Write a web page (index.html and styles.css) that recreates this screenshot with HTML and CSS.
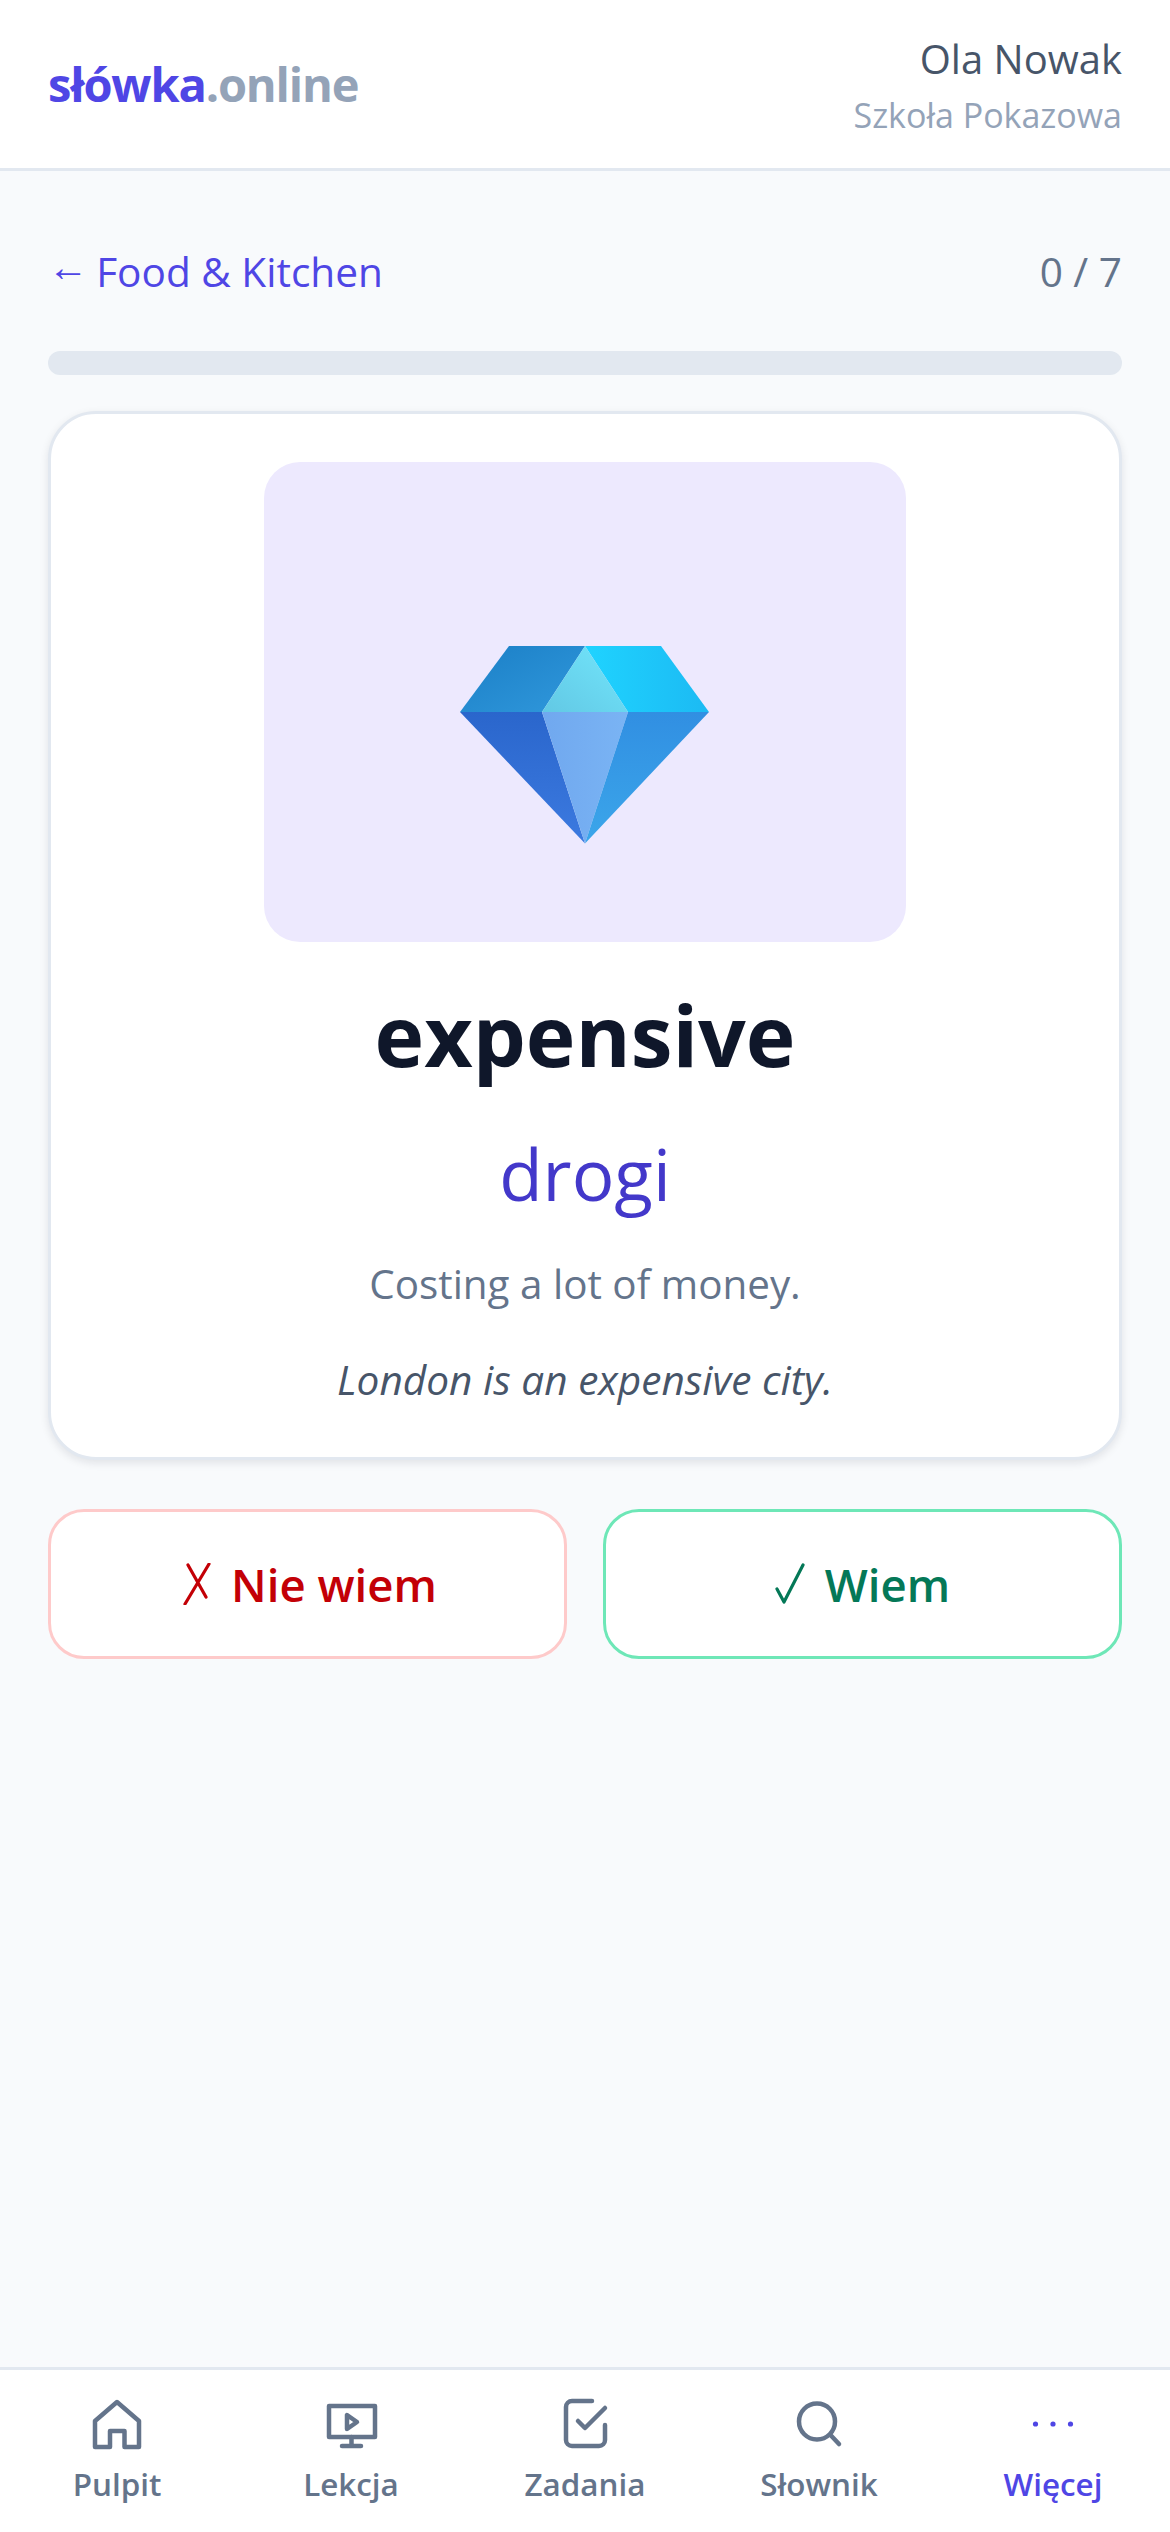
FILE: index.html
```html
<!DOCTYPE html>
<html lang="pl">
<head>
<meta charset="utf-8">
<title>słówka.online</title>
<link rel="stylesheet" href="styles.css">
</head>
<body>
<div class="app">
  <header class="topbar">
    <div class="logo"><span class="logo-main">słówka</span><span class="logo-dot">.online</span></div>
    <div class="user">
      <div class="user-name">Ola Nowak</div>
      <div class="user-school">Szkoła Pokazowa</div>
    </div>
  </header>
  <main class="content">
    <div class="crumbs">
      <a class="back"><span class="arrow">← </span>Food &amp; Kitchen</a>
      <span class="count">0 / 7</span>
    </div>
    <div class="progress"></div>
    <section class="card">
      <div class="picture">
        <svg class="gem" viewBox="30 -60 250 284" width="250" height="284" aria-label="💎">
          <defs>
            <linearGradient id="g1" x1="0" y1="0" x2="1" y2="1"><stop offset="0" stop-color="#1b7fc6"/><stop offset="1" stop-color="#3098dc"/></linearGradient>
            <linearGradient id="g2" x1="0" y1="0" x2="1" y2="0"><stop offset="0" stop-color="#1fd3ff"/><stop offset="1" stop-color="#1cbaf3"/></linearGradient>
            <linearGradient id="g3" x1="0" y1="1" x2="1" y2="0"><stop offset="0" stop-color="#62c8e4"/><stop offset="1" stop-color="#72e6fc"/></linearGradient>
            <linearGradient id="g4" x1="0" y1="0" x2="0" y2="1"><stop offset="0" stop-color="#2a66cc"/><stop offset="1" stop-color="#3c7ae0"/></linearGradient>
            <linearGradient id="g5" x1="0" y1="0" x2="1" y2="0"><stop offset="0" stop-color="#70a8ef"/><stop offset="1" stop-color="#7ab4f4"/></linearGradient>
            <linearGradient id="g6" x1="0" y1="0" x2="0" y2="1"><stop offset="0" stop-color="#318fe2"/><stop offset="1" stop-color="#3ba6ea"/></linearGradient>
          </defs>
          <polygon points="79,26 155,26 112,92 30,92" fill="url(#g1)"/>
          <polygon points="155,26 231,26 279,92 198,92" fill="url(#g2)"/>
          <polygon points="155,26 198,92 112,92" fill="url(#g3)"/>
          <polygon points="30,92 112,92 155,223.5" fill="url(#g4)"/>
          <polygon points="112,92 198,92 155,223.5" fill="url(#g5)"/>
          <polygon points="198,92 279,92 155,223.5" fill="url(#g6)"/>
        </svg>
      </div>
      <h1 class="word">expensive</h1>
      <div class="translation">drogi</div>
      <p class="definition">Costing a lot of money.</p>
      <p class="example">London is an expensive city.</p>
    </section>
    <div class="actions">
      <button class="btn btn-no">
        <svg class="mark mark-x" viewBox="0 0 28 42" width="28" height="42"><path d="M5 2 L23 34 M26 1 L2 41" /></svg>
        <span>Nie wiem</span>
      </button>
      <button class="btn btn-yes">
        <svg class="mark mark-v" viewBox="0 0 30 42" width="30" height="42"><path d="M2 26 L9 39 L28 2" /></svg>
        <span>Wiem</span>
      </button>
    </div>
  </main>
  <nav class="tabs">
    <a class="tab">
      <svg class="ico" viewBox="0 0 72 72"><path d="M36 14 L58 33 V59 H43.5 V43 H29 V59 H14 V33 Z"/></svg>
      <span>Pulpit</span>
    </a>
    <a class="tab">
      <svg class="ico" viewBox="0 0 72 72"><rect x="14" y="18" width="46" height="31"/><path d="M36.5 49 V58 M27 58 H46 M32 27 V41 L42 34 Z"/></svg>
      <span>Lekcja</span>
    </a>
    <a class="tab">
      <svg class="ico" viewBox="0 0 72 72"><path d="M43 13 H23 A6 6 0 0 0 17 19 V52 A6 6 0 0 0 23 58 H50 A6 6 0 0 0 56 52 V37 M29 33 L36 40 L56 20"/></svg>
      <span>Zadania</span>
    </a>
    <a class="tab">
      <svg class="ico" viewBox="0 0 72 72"><circle cx="34" cy="33.5" r="18"/><path d="M47.5 47 L56 56"/></svg>
      <span>Słownik</span>
    </a>
    <a class="tab tab-active">
      <svg class="ico dots" viewBox="0 0 72 72"><circle cx="18.5" cy="36" r="2.6"/><circle cx="36" cy="36" r="2.6"/><circle cx="53.5" cy="36" r="2.6"/></svg>
      <span>Więcej</span>
    </a>
  </nav>
</div>
</body>
</html>
```
FILE: styles.css
```css
* { box-sizing: border-box; }
html, body { margin: 0; padding: 0; }
body {
  font-family: "Open Sans", "Noto Sans", sans-serif;
  background: #f8fafc;
  color: #0f172a;
}
.app { min-height: 2532px; display: flex; flex-direction: column; }

.topbar {
  height: 171px;
  background: #fff;
  border-bottom: 3px solid #e2e8f0;
  padding: 0 48px;
  display: flex;
  justify-content: space-between;
  align-items: center;
}
.logo { font-size: 47px; font-weight: 700; letter-spacing: -1.15px; }
.logo-main { color: #4f46e5; }
.logo-dot { color: #94a3b8; }
.user { text-align: right; padding-top: 6px; }
.user-name { font-size: 40px; line-height: 57px; color: #475569; }
.user-school { font-size: 34px; line-height: 57px; color: #94a3b8; }

.content { flex: 1; padding: 72px 48px 0; }
.crumbs { display: flex; justify-content: space-between; align-items: center; height: 63px; padding-bottom: 6px; margin-bottom: 45px; font-size: 40.6px; }
.back { color: #4f46e5; }
.arrow {
  display: inline-block;
  white-space: pre;
  letter-spacing: -1.5px;
  transform: translateY(-6px);
}
.count { color: #64748b; }
.progress { height: 24px; border-radius: 12px; background: #e2e8f0; margin-bottom: 36px; }

.card {
  background: #fff;
  border: 3px solid #e2e8f0;
  border-radius: 48px;
  padding: 48px 48px 47px;
  box-shadow: 0 3px 9px rgba(15, 23, 42, .1);
  text-align: center;
}
.picture {
  width: 642px;
  height: 480px;
  margin: 0 auto;
  background: #ede9fe;
  border-radius: 36px;
  display: flex;
  align-items: center;
  justify-content: center;
}
.gem { display: block; }
.word { margin: 36px 0 0; font-size: 84px; line-height: 114px; font-weight: 700; color: #0f172a; }
.translation { margin-top: 34px; font-size: 71px; line-height: 96px; color: #4338ca; }
.definition { margin: 32px 0 0; font-size: 40.4px; line-height: 60px; color: #64748b; }
.example { margin: 36px 0 0; font-size: 40.6px; line-height: 60px; font-style: italic; color: #475569; }

.actions { display: grid; grid-template-columns: 1fr 1fr; gap: 36px; margin-top: 49px; }
.btn {
  height: 150px;
  background: #fff;
  border-radius: 36px;
  font-family: inherit;
  font-size: 45.5px;
  font-weight: 600;
  display: flex;
  align-items: center;
  justify-content: center;
  gap: 20px;
  padding: 0;
}
.btn-no { border: 3px solid #fecaca; color: #c30006; padding-left: 5px; }
.btn-yes { border: 3px solid #6ee7b7; color: #047857; }
.mark { fill: none; stroke: currentColor; stroke-width: 3.2; stroke-linecap: round; stroke-linejoin: round; }

.tabs {
  height: 165px;
  background: #fff;
  border-top: 3px solid #e2e8f0;
  display: grid;
  grid-template-columns: repeat(5, 1fr);
}
.tab {
  display: flex;
  flex-direction: column;
  align-items: center;
  padding-top: 18px;
  color: #64748b;
  font-size: 31.4px;
  font-weight: 600;
  line-height: 48px;
}
.ico {
  width: 72px;
  height: 72px;
  fill: none;
  stroke: currentColor;
  stroke-width: 4.5;
  stroke-linecap: round;
  stroke-linejoin: round;
}
.tab-active { color: #4f46e5; }
.dots { fill: currentColor; stroke: none; }
```
